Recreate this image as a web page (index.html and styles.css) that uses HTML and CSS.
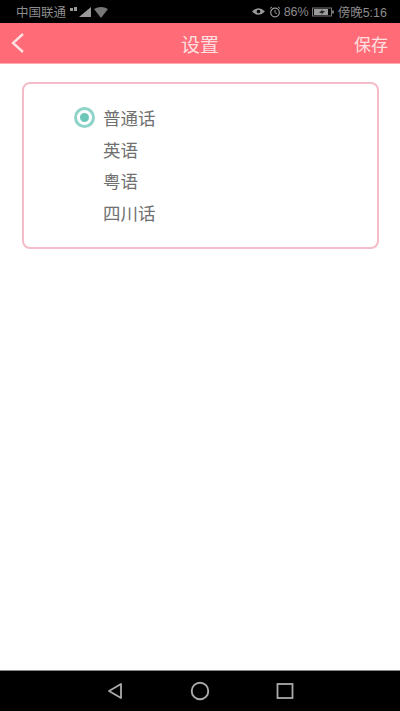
FILE: index.html
```html
<!DOCTYPE html>
<html lang="zh">
<head>
  <meta charset="UTF-8">
  <title>设置</title>
  <meta name="viewport" content="width=device-width, initial-scale=1.0"/>
  <link rel="stylesheet" href="styles.css">
</head>
<body>
  <div class="phone">
    <!-- Status bar -->
    <div class="status-bar">
      <div class="status-left">
        <span>中国联通</span>
        <svg class="signal" width="42" height="14" viewBox="0 0 42 14">
          <rect x="0" y="3" width="3" height="3" fill="#999"/>
          <rect x="4" y="2" width="3" height="4" fill="#999"/>
          <path d="M9 12 L21 12 L21 2 Z" fill="#999"/>
          <path d="M24 4 Q31 0 38 4 L31 13 Z" fill="#777"/>
        </svg>
      </div>
      <div class="status-right">
        <svg width="15" height="11" viewBox="0 0 15 11">
          <path d="M1 5.5 Q7.5 -1 14 5.5 Q7.5 12 1 5.5 Z" fill="#999"/>
          <circle cx="7.5" cy="5.5" r="1.8" fill="#000"/>
        </svg>
        <svg width="12" height="12" viewBox="0 0 12 12">
          <circle cx="6" cy="6.5" r="4.3" fill="none" stroke="#999" stroke-width="1.2"/>
          <path d="M1 2.5 L3 1 M11 2.5 L9 1 M6 4 V6.5 L8 8" fill="none" stroke="#999"/>
        </svg>
        <span>86%</span>
        <svg width="23" height="10" viewBox="0 0 23 10">
          <rect x="0.5" y="1" width="19" height="8" fill="none" stroke="#777"/>
          <rect x="2" y="2" width="14" height="6" fill="#999"/>
          <rect x="20" y="3.5" width="2" height="3" fill="#777"/>
          <path d="M11 2 L7 6 H10 L9 8 L13 4 H10 Z" fill="#222"/>
        </svg>
        <span>傍晚5:16</span>
      </div>
    </div>

    <!-- Title bar -->
    <div class="title-bar">
      <svg class="back" width="16" height="24" viewBox="0 0 16 24">
        <path d="M13 3 L3 12 L13 21" fill="none" stroke="#ffe0e2" stroke-width="2.4"/>
      </svg>
      <div class="title">设置</div>
      <div class="save">保存</div>
    </div>

    <!-- Language list -->
    <div class="content">
      <div class="card">
        <div class="lang-row">
          <span class="radio"><span class="radio-dot"></span></span>
          <span>普通话</span>
        </div>
        <div class="lang-row"><span class="radio-empty"></span><span>英语</span></div>
        <div class="lang-row"><span class="radio-empty"></span><span>粤语</span></div>
        <div class="lang-row"><span class="radio-empty"></span><span>四川话</span></div>
      </div>
    </div>

    <!-- Nav bar -->
    <div class="nav-bar">
      <svg width="18" height="18" viewBox="0 0 18 18">
        <path d="M15 2 L3 9 L15 16 Z" fill="none" stroke="#aaa" stroke-width="1.8" stroke-linejoin="round"/>
      </svg>
      <svg width="20" height="20" viewBox="0 0 20 20">
        <circle cx="10" cy="10" r="8.3" fill="none" stroke="#aaa" stroke-width="1.9"/>
      </svg>
      <svg width="18" height="18" viewBox="0 0 18 18">
        <rect x="1.5" y="2" width="15" height="14" fill="none" stroke="#aaa" stroke-width="1.8"/>
      </svg>
    </div>
  </div>
</body>
</html>
```

FILE: styles.css
```css
body {
  font-family: "Liberation Sans", "Noto Sans CJK SC", sans-serif;
  margin: 0;
  background: #ffffff;
}

.phone {
  display: flex;
  flex-direction: column;
  width: 400px;
  height: 711px;
  overflow: hidden;
}

.status-bar {
  display: flex;
  justify-content: space-between;
  align-items: center;
  height: 23px;
  padding: 0 13px 0 16px;
  background: #000000;
  color: #8c8c8c;
  font-size: 12.5px;
}

.status-left,
.status-right {
  display: flex;
  align-items: center;
}

.status-left {
  gap: 4px;
}

.status-right {
  gap: 3px;
}

.title-bar {
  display: flex;
  justify-content: space-between;
  align-items: center;
  position: relative;
  height: 40px;
  padding: 0 12px 0 10px;
  background: #ff6b76;
  border-bottom: 1px solid #ffa9ae;
  color: #ffe0e2;
  font-size: 17px;
}

.title {
  position: absolute;
  left: 0;
  right: 0;
  text-align: center;
  font-size: 19px;
}

.save {
  position: relative;
}

.content {
  flex: 1;
  padding: 18px 21px 0 22px;
}

.card {
  height: 167px;
  box-sizing: border-box;
  padding: 18px 0 0 50px;
  border: 2px solid #f3bcc8;
  border-radius: 8px;
}

.lang-row {
  display: flex;
  align-items: center;
  gap: 8px;
  height: 31.6px;
  color: #707070;
  font-size: 17.5px;
}

.radio,
.radio-empty {
  display: block;
  width: 21px;
  height: 21px;
  box-sizing: border-box;
  flex-shrink: 0;
}

.radio {
  display: flex;
  justify-content: center;
  align-items: center;
  border: 3px solid #8fd4c9;
  border-radius: 50%;
}

.radio-dot {
  width: 9px;
  height: 9px;
  border-radius: 50%;
  background: #6cc7b9;
}

.nav-bar {
  display: flex;
  justify-content: center;
  align-items: center;
  gap: 66px;
  height: 40px;
  background: #000000;
  border-top: 1px solid #888888;
}
```
